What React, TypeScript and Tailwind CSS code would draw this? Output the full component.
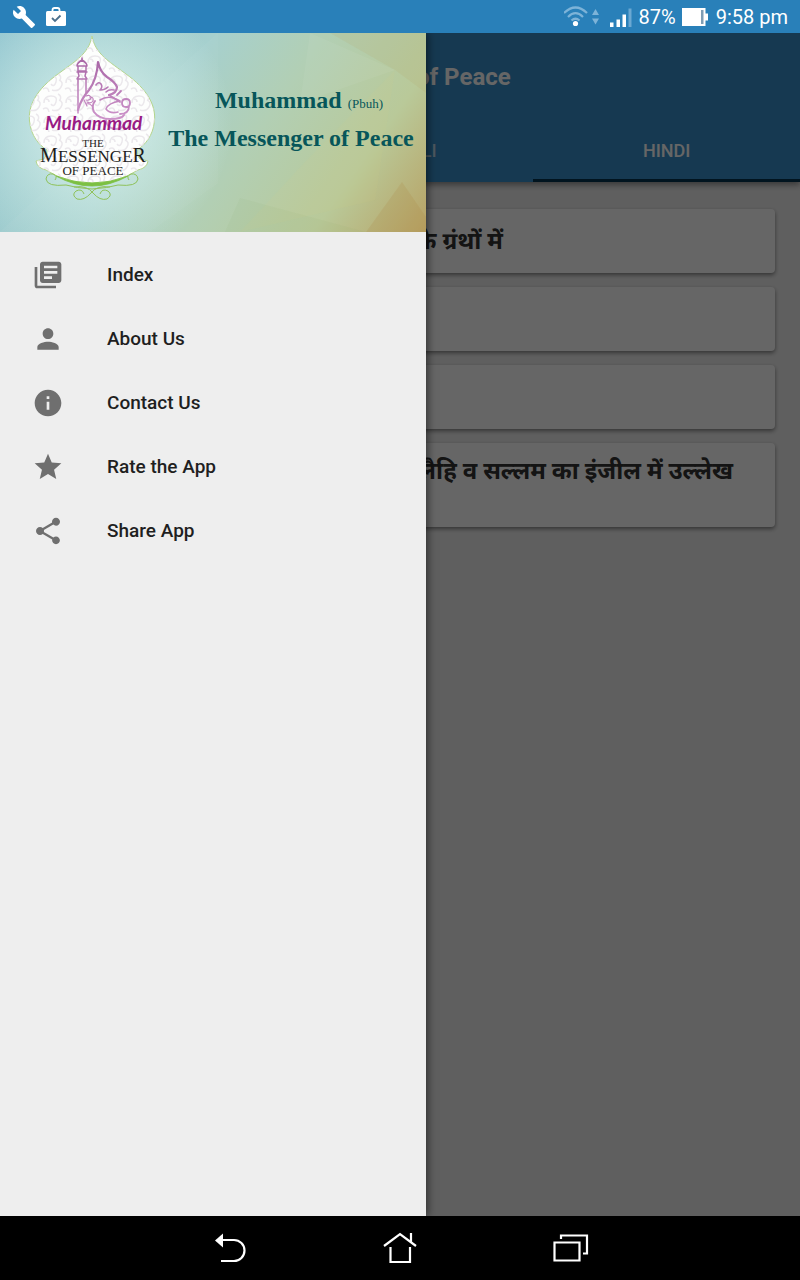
import {
  MdBuild,
  MdInfo,
  MdLibraryBooks,
  MdPerson,
  MdShare,
  MdStar,
} from "react-icons/md";

function ShopBagIcon() {
  return (
    <svg viewBox="0 0 20 20" className="size-5" aria-hidden="true">
      <path d="M6.500 5V3Q6.500 1 8.500 1h3q2 0 2 2v2" fill="none" stroke="#fff" strokeWidth="1.800" />
      <rect x="0" y="4" width="20" height="15" rx="1.500" fill="#fff" />
      <path d="M6 11l3 3 5.500-5.500" fill="none" stroke="#4b6f8c" strokeWidth="1.800" />
    </svg>
  );
}

function WifiIcon() {
  return (
    <svg viewBox="0 0 38 22" className="h-[22px] w-[38px]" aria-hidden="true">
      <g fill="none" stroke="#7db3d8" strokeWidth="2.200">
        <path d="M0 7Q11.500 -4 23 7" />
        <path d="M4 11Q11.500 3.500 19 11" />
        <path d="M7.500 14.500Q11.500 11 15.500 14.500" />
      </g>
      <circle cx="11.500" cy="17.500" r="2.600" fill="#fff" />
      <path d="M28 9l3.500-6L35 9zM28 12.500l3.500 6 3.500-6z" fill="#7db3d8" />
    </svg>
  );
}

function SignalIcon() {
  return (
    <svg viewBox="0 0 23 20" className="h-5 w-[23px]" aria-hidden="true">
      <path d="M0 15.500h3.500V20H0zM6.500 12.500H10V20H6.500zM12.500 7.500H16V20h-3.500z" fill="#fff" />
      <path d="M18.500 1.500h3V20h-3z" fill="#6ba8d2" />
    </svg>
  );
}

function BatteryIcon() {
  return (
    <svg viewBox="0 0 26 20" className="h-5 w-[26px]" aria-hidden="true">
      <path d="M0 1h23.500v5.500H26v7h-2.500V19H0z" fill="#fff" />
      <path d="M19 3h2.500v14H19z" fill="#7f9db4" />
    </svg>
  );
}

function StatusBar() {
  return (
    <div className="flex h-[33px] shrink-0 items-center justify-between bg-[#2980b9] pr-3 pl-3 text-white">
      <div className="flex items-center gap-2.5">
        <MdBuild className="size-6" aria-hidden="true" />
        <ShopBagIcon />
      </div>
      <div className="flex items-center text-[20px] leading-6">
        <WifiIcon />
        <span className="ml-2">
          <SignalIcon />
        </span>
        <span className="ml-1.5">87%</span>
        <span className="ml-1.5">
          <BatteryIcon />
        </span>
        <span className="ml-2">9:58 pm</span>
      </div>
    </div>
  );
}

function AppBar() {
  return (
    <header className="z-0 bg-[#3890ca] shadow-[0_3px_6px_rgba(0,0,0,0.4)]">
      <h1 className="flex h-[88px] items-center pl-[416px] text-[24px] font-bold whitespace-nowrap text-white">
        of Peace
      </h1>
      <div role="tablist" className="grid h-[61px] grid-cols-3 text-[18px] font-medium">
        <button type="button" role="tab" aria-selected={false} aria-label="English" />
        <button type="button" role="tab" aria-selected={false} className="border-b-[3px] border-transparent text-white/70">
          BENGALI
        </button>
        <button type="button" role="tab" aria-selected className="border-b-[3px] border-[#04334f] text-white">
          HINDI
        </button>
      </div>
    </header>
  );
}

const card =
  "rounded-sm bg-white text-right text-[24px] leading-8 font-bold text-[#333] shadow-[0_2px_4px_rgba(0,0,0,0.45)]";

function Reader() {
  return (
    <div className="flex flex-1 flex-col bg-[#eee]">
      <AppBar />
      <ul className="flex flex-col gap-3.5 px-[25px] pt-[27px]">
        <li className={`${card} min-h-16 pt-4 pr-[272px]`}>के ग्रंथों में</li>
        <li className={`${card} min-h-16`} />
        <li className={`${card} min-h-16`} />
        <li className={`${card} min-h-[84px] pt-3 pr-[42px]`}>लैहि व सल्लम का इंजील में उल्लेख</li>
      </ul>
    </div>
  );
}

const dome =
  "M72 3C75 21 90 29 106 41C127 56 136 72 134.500 88C133 103 125 112 117 117Q116 122 120 126L128 128Q127 135 118 137Q98 150 72 150Q46 150 26 137Q17 135 16 128L24 126Q28 122 27 117C19 112 11 103 9.500 88C8 72 17 56 38 41C54 29 69 21 72 3Z";

function Emblem() {
  return (
    <svg
      viewBox="0 0 144 170"
      className="h-[170px] w-36 shrink-0"
      role="img"
      aria-label="Muhammad The Messenger of Peace"
    >
      <defs>
        <pattern id="scrolls" width="22" height="20" patternUnits="userSpaceOnUse">
          <path
            d="M2 10q0-7 7-7t5 6-5 2M10 17q6 2 9-3t-2-7M1 16q5-3 6 3M16 1q4 2 2 6M4 6q3 0 3 3"
            fill="none"
            stroke="#ebe8ec"
            strokeWidth="1.500"
          />
        </pattern>
        <linearGradient id="violet" gradientUnits="userSpaceOnUse" x1="0" y1="25" x2="0" y2="98">
          <stop offset="0" stopColor="#a866a6" />
          <stop offset="1" stopColor="#d39bd0" />
        </linearGradient>
      </defs>
      <path d={dome} fill="#fdfefd" stroke="#b4d58c" strokeWidth="1" />
      <path d={dome} fill="url(#scrolls)" />
      <g fill="none" stroke="url(#violet)" strokeLinecap="round" strokeLinejoin="round">
        <path d="M62 25v2M62 27q-5 3-5 6h10q0-3-5-6M58 33v5h8v-5M57 39h10M58 39l1 4-2 3h10l-2-3 1-4M58 46v34M66 46v14" strokeWidth="1.500" />
        <path d="M58 77q3-11 11-20Q77 46 78 29q2 10 9 15 8 5 10 10 0 6-8 8" strokeWidth="2.200" />
        <path d="M76 52q3-4 5-1t-1 6q5 0 8-3M94 57q-5-1-8 2M80 67q9-6 20 1-12 2-14 8 4 5 12 3" strokeWidth="1.600" />
        <path d="M89 62l11 7M97 62l4-4M102 70q0-4 4-4t4 4-4 4-4-4M109 73q0 8-9 8" strokeWidth="1.800" />
        <path d="M75 68q-4 5-1 11 5 7 16 7 12 0 14-4M86 87q1 9 10 9 7 0 8-6" strokeWidth="2" />
        <path d="M66 63q4-2 5 2-1 3-5 2M70 64q4 0 3 4-2 3-6 1M66 71q4-1 6 2M64 67l3 6" strokeWidth="1.200" />
      </g>
      <text x="25" y="97" fontFamily="Lato, sans-serif" fontSize="19" fontStyle="italic" fontWeight="700" fill="#991b84">
        Muhammad
      </text>
      <g fontFamily="'Liberation Serif', serif" fill="#1d1d1b" textAnchor="middle">
        <text x="73" y="114" fontSize="11">
          THE
        </text>
        <text x="73" y="129" fontSize="20">
          M<tspan fontSize="17">ESSENGE</tspan>R
        </text>
        <text x="73" y="142" fontSize="13">
          OF PEACE
        </text>
      </g>
      <path d="M36 143q36 14 72 0-36 20-72 0z" fill="#7cc042" stroke="#7cc042" strokeWidth="0.800" />
      <g fill="none" stroke="#8fc25a" strokeWidth="1">
        <path d="M72 156q-16-1-26-4-19 2-20-6 1-6 7-5 5 2 2 6M72 156q16-1 26-4 19 2 20-6-1-6-7-5-5 2-2 6" />
        <path d="M54 154q13-2 19 6 7 8 14 6 6-4 1-8-6-3-8 3M90 154q-13-2-19 6-7 8-14 6-6-4-1-8 6-3 8 3" />
      </g>
    </svg>
  );
}

function BannerFacets() {
  return (
    <svg viewBox="0 0 426 199" preserveAspectRatio="none" className="absolute inset-0 size-full" aria-hidden="true">
      <path d="M218 0v150L150 199H0L140 70z" fill="#fff" opacity=".03" />
      <path d="M300 70l95-33-85-37z" fill="#fff" opacity=".05" />
      <path d="M426 0v60l-31-23L330 0z" fill="#b89a5c" opacity=".12" />
      <path d="M240 199l65-70 90-92-20 130z" fill="#e0d080" opacity=".07" />
      <path d="M366 199l36-50 24 35v15z" fill="#a57a30" opacity=".15" />
      <path d="M240 165l126 34H225z" fill="#7a9a50" opacity=".05" />
    </svg>
  );
}

function DrawerBanner() {
  return (
    <div className="relative h-[199px] bg-[linear-gradient(125deg,#93c6d0_0%,#a6d0ce_38%,#b2cfb4_58%,#b9c999_80%,#b8a264_100%)]">
      <BannerFacets />
      <div className="relative flex h-full bg-[radial-gradient(circle_at_92px_90px,rgba(240,255,250,0.7)_0px,rgba(225,248,240,0.4)_75px,transparent_140px)] pl-5">
        <Emblem />
        <div className="flex flex-1 flex-col items-center pt-12 pr-2 font-['Liberation_Serif',serif] text-[24px] leading-[38px] font-bold whitespace-nowrap text-[#07565a]">
          <p className="pl-4">
            Muhammad <span className="text-[13px] leading-none font-normal">(Pbuh)</span>
          </p>
          <p>The Messenger of Peace</p>
        </div>
      </div>
    </div>
  );
}

const menu = [
  { label: "Index", Icon: MdLibraryBooks },
  { label: "About Us", Icon: MdPerson },
  { label: "Contact Us", Icon: MdInfo },
  { label: "Rate the App", Icon: MdStar },
  { label: "Share App", Icon: MdShare },
];

function Drawer() {
  return (
    <aside className="absolute inset-y-0 left-0 w-[426px] max-w-full bg-[#eee] shadow-[2px_0_8px_rgba(0,0,0,0.5)]">
      <DrawerBanner />
      <nav className="flex flex-col pt-[11px]">
        {menu.map(({ label, Icon }) => (
          <a
            key={label}
            href="#"
            className="flex h-16 items-center gap-[43px] px-8 text-[19px] font-medium text-[#1f1f1f]"
          >
            <Icon className="size-8 text-[#6f6f6f]" aria-hidden="true" />
            {label}
          </a>
        ))}
      </nav>
    </aside>
  );
}

function NavigationBar() {
  return (
    <div className="z-10 flex h-16 shrink-0 items-center justify-center gap-[130px] bg-black text-white">
      <button type="button" aria-label="Back">
        <svg viewBox="0 0 40 40" className="size-10" fill="none" stroke="currentColor" strokeWidth="2.200">
          <path d="M12 12h12a10.500 10.500 0 0 1 0 21H11" />
          <path d="M5 12.500l8-7v14z" fill="currentColor" stroke="none" />
        </svg>
      </button>
      <button type="button" aria-label="Home">
        <svg viewBox="0 0 40 40" className="size-10" fill="none" stroke="currentColor" strokeWidth="2.200">
          <path d="M4 18L20 6l16 12M31 14V5M10.500 19v15h19.500V19" />
        </svg>
      </button>
      <button type="button" aria-label="Recent apps">
        <svg viewBox="0 0 40 40" className="size-10" fill="none" stroke="currentColor" strokeWidth="2.200">
          <path d="M4.500 14.500h25v18h-25zM11 11V7.500h26v18h-4" />
        </svg>
      </button>
    </div>
  );
}

export default function App() {
  return (
    <div className="flex min-h-screen flex-col overflow-hidden bg-black font-[Roboto,'Noto_Sans',sans-serif]">
      <StatusBar />
      <main className="relative flex flex-1 flex-col overflow-hidden">
        <Reader />
        <div className="absolute inset-0 bg-black/60" />
        <Drawer />
      </main>
      <NavigationBar />
    </div>
  );
}
